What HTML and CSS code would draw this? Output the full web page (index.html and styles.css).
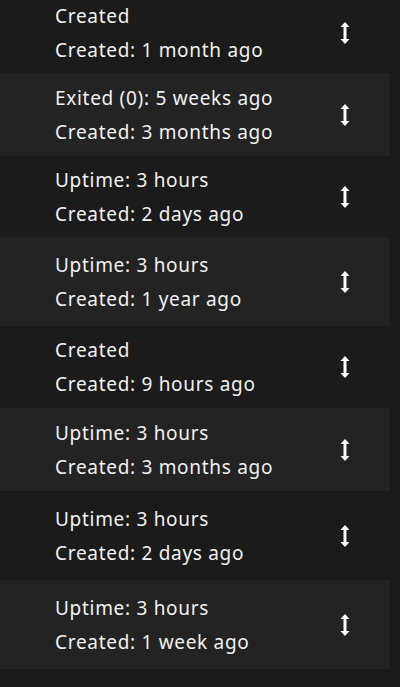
FILE: index.html
```html
<!DOCTYPE html>
<html lang="en">
<head>
    <meta charset="UTF-8">
    <meta name="viewport" content="width=device-width, initial-scale=1.0">
    <title>Containers</title>
    <link rel="stylesheet" href="styles.css">
</head>
<body>
    <div id="list">
        <div class="row dark h80">
            <div class="info">
                <div class="line">Created</div>
                <div class="line">Created: 1 month ago</div>
            </div>
            <div class="handle"><svg width="10" height="22" viewBox="0 0 10 22"><path d="M5 0 L9.5 5 L6.5 5 L6.5 17 L9.5 17 L5 22 L0.5 17 L3.5 17 L3.5 5 L0.5 5 Z" fill="#fff"/></svg></div>
        </div>
        <div class="row light h83">
            <div class="info">
                <div class="line">Exited (0): 5 weeks ago</div>
                <div class="line">Created: 3 months ago</div>
            </div>
            <div class="handle"><svg width="10" height="22" viewBox="0 0 10 22"><path d="M5 0 L9.5 5 L6.5 5 L6.5 17 L9.5 17 L5 22 L0.5 17 L3.5 17 L3.5 5 L0.5 5 Z" fill="#fff"/></svg></div>
        </div>
        <div class="row dark h82">
            <div class="info">
                <div class="line">Uptime: 3 hours</div>
                <div class="line">Created: 2 days ago</div>
            </div>
            <div class="handle"><svg width="10" height="22" viewBox="0 0 10 22"><path d="M5 0 L9.5 5 L6.5 5 L6.5 17 L9.5 17 L5 22 L0.5 17 L3.5 17 L3.5 5 L0.5 5 Z" fill="#fff"/></svg></div>
        </div>
        <div class="row light h88">
            <div class="info">
                <div class="line">Uptime: 3 hours</div>
                <div class="line">Created: 1 year ago</div>
            </div>
            <div class="handle"><svg width="10" height="22" viewBox="0 0 10 22"><path d="M5 0 L9.5 5 L6.5 5 L6.5 17 L9.5 17 L5 22 L0.5 17 L3.5 17 L3.5 5 L0.5 5 Z" fill="#fff"/></svg></div>
        </div>
        <div class="row dark h82">
            <div class="info">
                <div class="line">Created</div>
                <div class="line">Created: 9 hours ago</div>
            </div>
            <div class="handle"><svg width="10" height="22" viewBox="0 0 10 22"><path d="M5 0 L9.5 5 L6.5 5 L6.5 17 L9.5 17 L5 22 L0.5 17 L3.5 17 L3.5 5 L0.5 5 Z" fill="#fff"/></svg></div>
        </div>
        <div class="row light h83">
            <div class="info">
                <div class="line">Uptime: 3 hours</div>
                <div class="line">Created: 3 months ago</div>
            </div>
            <div class="handle"><svg width="10" height="22" viewBox="0 0 10 22"><path d="M5 0 L9.5 5 L6.5 5 L6.5 17 L9.5 17 L5 22 L0.5 17 L3.5 17 L3.5 5 L0.5 5 Z" fill="#fff"/></svg></div>
        </div>
        <div class="row dark h89">
            <div class="info">
                <div class="line">Uptime: 3 hours</div>
                <div class="line">Created: 2 days ago</div>
            </div>
            <div class="handle"><svg width="10" height="22" viewBox="0 0 10 22"><path d="M5 0 L9.5 5 L6.5 5 L6.5 17 L9.5 17 L5 22 L0.5 17 L3.5 17 L3.5 5 L0.5 5 Z" fill="#fff"/></svg></div>
        </div>
        <div class="row light h89">
            <div class="info">
                <div class="line">Uptime: 3 hours</div>
                <div class="line">Created: 1 week ago</div>
            </div>
            <div class="handle"><svg width="10" height="22" viewBox="0 0 10 22"><path d="M5 0 L9.5 5 L6.5 5 L6.5 17 L9.5 17 L5 22 L0.5 17 L3.5 17 L3.5 5 L0.5 5 Z" fill="#fff"/></svg></div>
        </div>
    </div>
</body>
</html>
```
FILE: styles.css
```css
body {
    margin: 0;
    background-color: #1b1b1b;
    overflow: hidden;
    font-family: "Noto Sans", "Open Sans", sans-serif;
}
#list {
    width: 390px;
    margin-top: -7px;
    display: flex;
    flex-direction: column;
}
.row {
    display: flex;
    align-items: center;
    padding-left: 55px;
}
.dark {
    background-color: #1b1b1b;
}
.light {
    background-color: #232323;
}
.h80 { height: 80px; }
.h82 { height: 82px; }
.h83 { height: 83px; }
.h88 { height: 88px; }
.h89 { height: 89px; }

.info {
    width: 285px;
    display: flex;
    flex-direction: column;
}
.line {
    color: #f0f0f0;
    font-size: 19px;
    letter-spacing: 0.7px;
    line-height: 34px;
    white-space: nowrap;
}
.handle {
    display: flex;
    align-items: center;
}
.handle svg {
    display: block;
}
```
